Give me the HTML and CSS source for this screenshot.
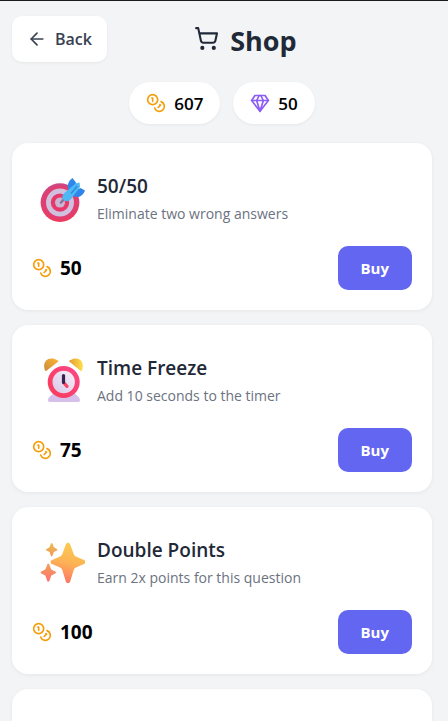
FILE: index.html
```html
<!DOCTYPE html>
<html lang="en">
<head>
    <meta charset="UTF-8">
    <meta name="viewport" content="width=device-width, initial-scale=1.0">
    <title>Shop</title>
    <link rel="stylesheet" href="styles.css">
</head>
<body>
    <!-- Shared icons -->
    <svg class="sprite" aria-hidden="true">
        <symbol id="coins" viewBox="0 0 24 24">
            <circle cx="8" cy="8" r="6"/>
            <path d="M18.09 10.37A6 6 0 1 1 10.34 18"/>
            <path d="M7 6h1v4"/>
            <path d="m16.71 13.88.7.71-2.82 2.82"/>
        </symbol>
    </svg>

    <header class="header">
        <button class="back-btn" type="button">
            <svg class="icon" viewBox="0 0 24 24"><path d="m12 19-7-7 7-7"/><path d="M19 12H5"/></svg>
            Back
        </button>
        <h1 class="title">
            <svg class="icon cart" viewBox="0 0 24 24">
                <circle cx="8" cy="21" r="1"/>
                <circle cx="19" cy="21" r="1"/>
                <path d="M2.05 2.05h2l2.66 12.42a2 2 0 0 0 2 1.58h9.78a2 2 0 0 0 1.95-1.57l1.65-7.43H5.12"/>
            </svg>
            Shop
        </h1>
    </header>

    <div class="balance">
        <div class="pill">
            <svg class="icon coin"><use href="#coins"/></svg>
            <span>607</span>
        </div>
        <div class="pill">
            <svg class="icon gem" viewBox="0 0 24 24">
                <path d="M6 3h12l4 6-10 13L2 9Z"/>
                <path d="M11 3 8 9l4 13 4-13-3-6"/>
                <path d="M2 9h20"/>
            </svg>
            <span>50</span>
        </div>
    </div>

    <main class="items">
        <section class="card">
            <div class="info">
                <svg class="emoji" viewBox="0 0 53 48">
                    <defs>
                        <linearGradient id="rim" x1="0" y1="0" x2="0" y2="1">
                            <stop offset="0" stop-color="#c94a86"/>
                            <stop offset="1" stop-color="#ee3a5c"/>
                        </linearGradient>
                        <linearGradient id="fin" x1="0" y1="0" x2="1" y2="1">
                            <stop offset="0" stop-color="#2f8fe8"/>
                            <stop offset="1" stop-color="#2f7df0"/>
                        </linearGradient>
                    </defs>
                    <circle cx="28" cy="26.6" r="19.4" fill="url(#rim)"/>
                    <circle cx="28" cy="26.6" r="17" fill="#e23d70"/>
                    <circle cx="28" cy="26.6" r="14" fill="#cfc0de"/>
                    <circle cx="28" cy="26.6" r="9.2" fill="#e8386a"/>
                    <circle cx="28" cy="26.6" r="5" fill="#c9b4d2"/>
                    <path d="M29 26.500 33 22" stroke="#86709a" stroke-width="2.500" stroke-linecap="round"/>
                    <path d="M36 13.5C35 8 37 4.500 40.500 2L44 6.500 43 12Z" fill="url(#fin)"/>
                    <path d="M41 20c4 2 9 1.500 12-5.500L48.500 12 42 15Z" fill="url(#fin)"/>
                    <path d="M43.500 7.500 47.500 6.500 48 11 39.500 22.500C37 26 32.500 26 31 23 29.500 20.500 30.500 18.500 33 16.500Z" fill="#4db8f3"/>
                    <path d="M45 10.500 39.500 17" stroke="#2c86de" stroke-width="1.200" stroke-linecap="round"/>
                </svg>
                <div>
                    <h2 class="name">50/50</h2>
                    <p class="desc">Eliminate two wrong answers</p>
                </div>
            </div>
            <div class="buy-row">
                <div class="price"><svg class="icon coin"><use href="#coins"/></svg>50</div>
                <button class="buy-btn" type="button">Buy</button>
            </div>
        </section>

        <section class="card">
            <div class="info">
                <svg class="emoji" viewBox="0 0 53 48">
                    <defs>
                        <linearGradient id="bellLeft" x1="1" y1="0" x2="0" y2="1">
                            <stop offset="0" stop-color="#ffb534"/>
                            <stop offset="1" stop-color="#c98a3c"/>
                        </linearGradient>
                        <linearGradient id="bellRight" x1="0" y1="0" x2="1" y2="0">
                            <stop offset="0" stop-color="#e59a36"/>
                            <stop offset="1" stop-color="#ffe14a"/>
                        </linearGradient>
                        <linearGradient id="ring" x1="1" y1="0" x2="0" y2="1">
                            <stop offset="0" stop-color="#fb4689"/>
                            <stop offset="1" stop-color="#fb3a58"/>
                        </linearGradient>
                        <linearGradient id="face" x1="1" y1="0" x2="0" y2="1">
                            <stop offset="0" stop-color="#f6eef8"/>
                            <stop offset="1" stop-color="#d9c8e8"/>
                        </linearGradient>
                    </defs>
                    <path d="M22 35h20c2 2 6 4 6 7 0 1.500-.5 2-2 2H18c-1.500 0-2-.5-2-2 0-3 4-5 6-7Z" fill="#d6c0ea"/>
                    <path d="M13 12.500C9.500 3 17-3 26 2.500c.5.500.3 1-.3 1.500L14.500 12.700c-.6.500-1.200.3-1.500-.2Z" fill="url(#bellLeft)"/>
                    <path d="M50 12.500C53.500 3 46-3 37.500 2.500c-.5.500-.3 1 .3 1.500L48.500 12.700c.6.500 1.200.3 1.500-.2Z" fill="url(#bellRight)"/>
                    <circle cx="31.700" cy="24" r="16" fill="url(#ring)"/>
                    <circle cx="31.700" cy="24" r="11.200" fill="url(#face)"/>
                    <path d="M32 25 35 28.300" stroke="#f94264" stroke-width="3.200" stroke-linecap="round"/>
                    <path d="M31.500 17.500v7" stroke="#33234f" stroke-width="3.200" stroke-linecap="round"/>
                </svg>
                <div>
                    <h2 class="name">Time Freeze</h2>
                    <p class="desc">Add 10 seconds to the timer</p>
                </div>
            </div>
            <div class="buy-row">
                <div class="price"><svg class="icon coin"><use href="#coins"/></svg>75</div>
                <button class="buy-btn" type="button">Buy</button>
            </div>
        </section>

        <section class="card">
            <div class="info">
                <svg class="emoji" viewBox="0 0 53 48">
                    <defs>
                        <linearGradient id="spark" x1="0.6" y1="0" x2="0.4" y2="1">
                            <stop offset="0" stop-color="#fbcb52"/>
                            <stop offset="0.5" stop-color="#fdb255"/>
                            <stop offset="1" stop-color="#fb7667"/>
                        </linearGradient>
                        <linearGradient id="sparkTop" x1="0" y1="0" x2="0" y2="1">
                            <stop offset="0" stop-color="#e9bb55"/>
                            <stop offset="1" stop-color="#f39a58"/>
                        </linearGradient>
                        <linearGradient id="sparkLow" x1="0" y1="0" x2="0" y2="1">
                            <stop offset="0" stop-color="#f0a25a"/>
                            <stop offset="1" stop-color="#ff7070"/>
                        </linearGradient>
                    </defs>
                    <path d="M33.800 4.500c.8-2.200 3.600-2.200 4.400 0l3.500 9.500c.6 1.500 1.400 2.300 2.800 2.800l7.500 3.200c1.800.8 1.800 3.200 0 4l-7.500 3.200c-1.400.6-2.200 1.400-2.800 2.800l-3.500 11.500c-.8 2.200-3.600 2.200-4.400 0L30.300 30c-.6-1.400-1.400-2.200-2.800-2.800L20 24c-1.800-.8-1.800-3.200 0-4l7.500-3.200c1.400-.5 2.200-1.300 2.800-2.800Z" fill="url(#spark)"/>
                    <path d="M18.900 3.700c.3-.9 1.300-.9 1.600 0l1.400 3.600 3 1.600c.7.400.7 1.200 0 1.600l-3 1.600-1.400 3.600c-.3.900-1.300.9-1.600 0l-1.400-3.600-3-1.600c-.7-.4-.7-1.200 0-1.600l3-1.600Z" fill="url(#sparkTop)"/>
                    <path d="M15.300 24.400c.4-1.100 1.600-1.100 2 0l2 5 4 2.100c.9.500.9 1.500 0 2l-4 2.100-2 5.400c-.4 1.100-1.600 1.100-2 0l-2-5.400-4-2.100c-.9-.5-.9-1.500 0-2l4-2.100Z" fill="url(#sparkLow)"/>
                </svg>
                <div>
                    <h2 class="name">Double Points</h2>
                    <p class="desc">Earn 2x points for this question</p>
                </div>
            </div>
            <div class="buy-row">
                <div class="price"><svg class="icon coin"><use href="#coins"/></svg>100</div>
                <button class="buy-btn" type="button">Buy</button>
            </div>
        </section>

        <section class="card card-next"></section>
    </main>
</body>
</html>
```

FILE: styles.css
```css
* {
    box-sizing: border-box;
}
body {
    margin: 0;
    padding: 15px 16px 0 12px;
    min-height: 100vh;
    border-top: 1px solid #1c1b22;
    background: #f3f4f6;
    font-family: 'Open Sans', 'Noto Sans', sans-serif;
    color: #000;
}
h1, h2, p {
    margin: 0;
}
button {
    border: none;
    font-family: inherit;
    cursor: pointer;
}
.sprite {
    display: none;
}
.icon {
    width: 20px;
    height: 20px;
    flex-shrink: 0;
    fill: none;
    stroke: currentColor;
    stroke-width: 2;
    stroke-linecap: round;
    stroke-linejoin: round;
}
.coin {
    color: #f59e0b;
}
.gem {
    color: #8b5cf6;
}

/* Header */
.header {
    display: flex;
    align-items: flex-end;
    padding-right: 48px;
    margin-bottom: 20px;
}
.back-btn {
    display: flex;
    align-items: center;
    gap: 8px;
    height: 46px;
    padding: 0 15px;
    border-radius: 10px;
    background: #fff;
    box-shadow: 0 1px 3px rgba(0, 0, 0, 0.06);
    color: #374151;
    font-size: 16px;
    font-weight: 600;
}
.title {
    flex: 1;
    display: flex;
    justify-content: center;
    align-items: baseline;
    gap: 11px;
    color: #1f2937;
    font-size: 27px;
    line-height: 42px;
    font-weight: 700;
}
.cart {
    width: 25px;
    height: 25px;
}

/* Coins and gems */
.balance {
    display: flex;
    justify-content: center;
    gap: 13px;
    margin-bottom: 19px;
}
.pill {
    display: flex;
    align-items: center;
    gap: 8px;
    height: 42px;
    padding: 0 17px;
    border-radius: 21px;
    background: #fff;
    box-shadow: 0 1px 3px rgba(0, 0, 0, 0.06);
    font-size: 17px;
    font-weight: 600;
}

/* Shop items */
.items {
    display: flex;
    flex-direction: column;
    gap: 15px;
}
.card {
    padding: 20px;
    border-radius: 16px;
    background: #fff;
    box-shadow: 0 1px 4px rgba(0, 0, 0, 0.06);
}
.card-next {
    min-height: 167px;
}
.info {
    display: flex;
    align-items: center;
    gap: 12px;
    height: 74px;
    margin-bottom: 9px;
}
.emoji {
    width: 53px;
    height: 48px;
    flex-shrink: 0;
}
.name {
    color: #1f2937;
    font-size: 19px;
    line-height: 28px;
    font-weight: 600;
}
.desc {
    color: #6b7280;
    font-size: 14px;
    line-height: 28px;
}
.buy-row {
    display: flex;
    justify-content: space-between;
    align-items: center;
}
.price {
    display: flex;
    align-items: center;
    gap: 8px;
    font-size: 19px;
    font-weight: 700;
}
.buy-btn {
    height: 44px;
    padding: 0 23px;
    border-radius: 10px;
    background: #6366f1;
    color: #fff;
    font-size: 15px;
    font-weight: 700;
}
```
